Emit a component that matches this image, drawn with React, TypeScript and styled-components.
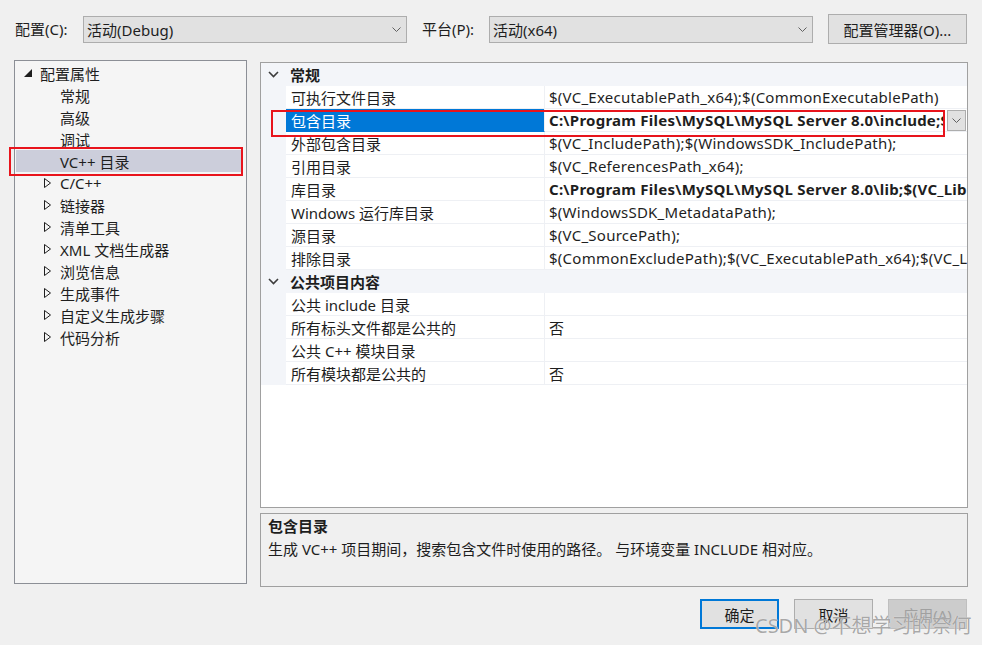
import React from 'react';
import styled, { createGlobalStyle } from 'styled-components';

const GlobalStyle = createGlobalStyle`
  html, body { margin: 0; padding: 0; background: #f0f0f0; }
  body {
    font-family: "Noto Sans", "Noto Sans CJK SC", sans-serif;
    font-size: 15px;
    color: #1e1e1e;
  }
  * { box-sizing: border-box; }
`;

const Window = styled.div`
  position: relative;
  width: 982px;
  height: 645px;
  background: #f0f0f0;
  overflow: hidden;
`;

const TopBar = styled.div`
  display: flex;
  align-items: center;
  height: 30px;
  margin-top: 14px;
  padding-left: 14px;
`;

const Label = styled.span<{ $w: number }>`
  width: ${p => p.$w}px;
  padding-left: 1px;
  white-space: nowrap;
  line-height: 20px;
`;

const Select = styled.div`
  display: flex;
  align-items: center;
  width: 324px;
  height: 27px;
  border: 1px solid #adadad;
  background: #e1e1e1;
  padding: 0 5px 0 3px;
`;

const SelectText = styled.span`
  flex: 1;
  white-space: nowrap;
`;

const PushButton = styled.div<{ $primary?: boolean; $disabled?: boolean; $w: number }>`
  display: flex;
  align-items: center;
  justify-content: center;
  width: ${p => p.$w}px;
  height: 30px;
  background: ${p => (p.$disabled ? '#cccccc' : '#e1e1e1')};
  border: ${p => (p.$primary ? '2px solid #0078d7' : p.$disabled ? '1px solid #bfbfbf' : '1px solid #adadad')};
  color: ${p => (p.$disabled ? '#a0a0a0' : '#1e1e1e')};
  white-space: nowrap;
`;

const Main = styled.div`
  display: flex;
  align-items: flex-start;
  margin-top: 16px;
  padding-left: 14px;
  gap: 13px;
`;

const TreePanel = styled.div`
  width: 233px;
  height: 524px;
  border: 1px solid #8c8f96;
  background: #f5f5f5;
  padding-top: 1px;
`;

const TreeRow = styled.div<{ $level: number; $selected?: boolean }>`
  display: flex;
  align-items: center;
  height: 22px;
  margin: 0 3px 0 1px;
  padding-left: ${p => 8 + p.$level * 20}px;
  background: ${p => (p.$selected ? '#cccedb' : 'transparent')};
  white-space: nowrap;
`;

const ArrowSlot = styled.span`
  display: flex;
  align-items: center;
  width: 16px;
  height: 22px;
`;

const RightColumn = styled.div`
  display: flex;
  flex-direction: column;
  gap: 5px;
  width: 708px;
  margin-top: 2px;
`;

const Grid = styled.div`
  height: 446px;
  border: 1px solid #a0a0a0;
  background: #ffffff;
`;

const CategoryRow = styled.div`
  display: flex;
  align-items: center;
  height: 23px;
  background: #f3f5f9;
  font-weight: 700;
`;

const CategoryToggle = styled.span`
  display: flex;
  align-items: center;
  width: 29px;
  padding-left: 7px;
`;

const PropRow = styled.div`
  display: flex;
  height: 23px;
`;

const Gutter = styled.div`
  width: 25px;
  background: #f3f5f9;
`;

const NameCell = styled.div<{ $selected?: boolean }>`
  display: flex;
  align-items: center;
  width: 259px;
  padding-left: 5px;
  background: ${p => (p.$selected ? '#0078d7' : '#ffffff')};
  color: ${p => (p.$selected ? '#ffffff' : '#1e1e1e')};
  border-bottom: 1px solid ${p => (p.$selected ? '#0078d7' : '#eef0f4')};
  border-right: 1px solid #eef0f4;
  white-space: nowrap;
`;

const ValueCell = styled.div`
  display: flex;
  align-items: center;
  flex: 1;
  min-width: 0;
  border-bottom: 1px solid #eef0f4;
`;

const ValueText = styled.span<{ $bold?: boolean }>`
  flex: 1;
  min-width: 0;
  padding-left: 4px;
  overflow: hidden;
  white-space: nowrap;
  letter-spacing: 0.25px;
  font-weight: ${p => (p.$bold ? 700 : 400)};
`;

const DropButton = styled.span`
  display: flex;
  align-items: center;
  justify-content: center;
  width: 19px;
  height: 21px;
  margin: 0 1px 0 3px;
  background: #e1e1e1;
  border: 1px solid #adadad;
`;

const DescPanel = styled.div`
  height: 74px;
  border: 1px solid #a0a0a0;
  background: #f0f0f0;
  padding: 1px 7px 0;
  line-height: 23px;
`;

const DescTitle = styled.div`
  font-weight: 700;
`;

const ButtonBar = styled.div`
  display: flex;
  justify-content: flex-end;
  gap: 15px;
  margin-top: 12px;
  padding-right: 15px;
`;

const Annotation = styled.div<{ $x: number; $y: number; $w: number; $h: number }>`
  position: absolute;
  left: ${p => p.$x}px;
  top: ${p => p.$y}px;
  width: ${p => p.$w}px;
  height: ${p => p.$h}px;
  border: 2px solid #e8141c;
  pointer-events: none;
`;

const Watermark = styled.div`
  position: absolute;
  left: 755px;
  top: 612px;
  font-size: 20px;
  line-height: 27px;
  color: rgba(140, 140, 140, 0.75);
  text-shadow: 0 0 1px #ffffff;
  white-space: nowrap;
  pointer-events: none;
`;

const SmallChevron = () => (
  <svg width="9" height="5" viewBox="0 0 9 5">
    <polyline points="0.5,0.5 4.5,4.5 8.5,0.5" fill="none" stroke="#606060" strokeWidth="1" />
  </svg>
);

const CategoryChevron = () => (
  <svg width="11" height="7" viewBox="0 0 11 7">
    <polyline points="1,1 5.5,5.5 10,1" fill="none" stroke="#3c3c3c" strokeWidth="1.6" />
  </svg>
);

const ExpandedArrow = () => (
  <svg width="8" height="8" viewBox="0 0 8 8">
    <polygon points="8,0 8,8 0,8" fill="#1e1e1e" />
  </svg>
);

const CollapsedArrow = () => (
  <svg width="7" height="10" viewBox="0 0 7 10">
    <polygon points="0.5,0.5 6.5,5 0.5,9.5" fill="none" stroke="#1e1e1e" strokeWidth="1" />
  </svg>
);

type TreeItem = { label: string; level: number; arrow?: 'open' | 'closed'; selected?: boolean };

const treeItems: TreeItem[] = [
  { label: '配置属性', level: 0, arrow: 'open' },
  { label: '常规', level: 1 },
  { label: '高级', level: 1 },
  { label: '调试', level: 1 },
  { label: 'VC++ 目录', level: 1, selected: true },
  { label: 'C/C++', level: 1, arrow: 'closed' },
  { label: '链接器', level: 1, arrow: 'closed' },
  { label: '清单工具', level: 1, arrow: 'closed' },
  { label: 'XML 文档生成器', level: 1, arrow: 'closed' },
  { label: '浏览信息', level: 1, arrow: 'closed' },
  { label: '生成事件', level: 1, arrow: 'closed' },
  { label: '自定义生成步骤', level: 1, arrow: 'closed' },
  { label: '代码分析', level: 1, arrow: 'closed' },
];

type Prop = { name: string; value: string; bold?: boolean; selected?: boolean };
type Section = { title: string; props: Prop[] };

const sections: Section[] = [
  {
    title: '常规',
    props: [
      { name: '可执行文件目录', value: '$(VC_ExecutablePath_x64);$(CommonExecutablePath)' },
      { name: '包含目录', value: 'C:\\Program Files\\MySQL\\MySQL Server 8.0\\include;$(VC_IncludePath);$(WindowsSDK_IncludePath);', bold: true, selected: true },
      { name: '外部包含目录', value: '$(VC_IncludePath);$(WindowsSDK_IncludePath);' },
      { name: '引用目录', value: '$(VC_ReferencesPath_x64);' },
      { name: '库目录', value: 'C:\\Program Files\\MySQL\\MySQL Server 8.0\\lib;$(VC_LibraryPath_x64);$(WindowsSDK_LibraryPath_x64)', bold: true },
      { name: 'Windows 运行库目录', value: '$(WindowsSDK_MetadataPath);' },
      { name: '源目录', value: '$(VC_SourcePath);' },
      { name: '排除目录', value: '$(CommonExcludePath);$(VC_ExecutablePath_x64);$(VC_LibraryPath_x64)' },
    ],
  },
  {
    title: '公共项目内容',
    props: [
      { name: '公共 include 目录', value: '' },
      { name: '所有标头文件都是公共的', value: '否' },
      { name: '公共 C++ 模块目录', value: '' },
      { name: '所有模块都是公共的', value: '否' },
    ],
  },
];

export default function App() {
  return (
    <Window>
      <GlobalStyle />
      <TopBar>
        <Label $w={69}>配置(C):</Label>
        <Select>
          <SelectText>活动(Debug)</SelectText>
          <SmallChevron />
        </Select>
        <Label $w={68} style={{ marginLeft: 14 }}>平台(P):</Label>
        <Select>
          <SelectText>活动(x64)</SelectText>
          <SmallChevron />
        </Select>
        <PushButton $w={139} style={{ marginLeft: 15 }}>配置管理器(O)...</PushButton>
      </TopBar>

      <Main>
        <TreePanel>
          {treeItems.map((t, i) => (
            <TreeRow key={i} $level={t.level} $selected={t.selected}>
              <ArrowSlot>
                {t.arrow === 'open' && <ExpandedArrow />}
                {t.arrow === 'closed' && <CollapsedArrow />}
              </ArrowSlot>
              {t.label}
            </TreeRow>
          ))}
        </TreePanel>

        <RightColumn>
          <Grid>
            {sections.map(s => (
              <React.Fragment key={s.title}>
                <CategoryRow>
                  <CategoryToggle>
                    <CategoryChevron />
                  </CategoryToggle>
                  {s.title}
                </CategoryRow>
                {s.props.map(p => (
                  <PropRow key={p.name}>
                    <Gutter />
                    <NameCell $selected={p.selected}>{p.name}</NameCell>
                    <ValueCell>
                      <ValueText $bold={p.bold}>{p.value}</ValueText>
                      {p.selected && (
                        <DropButton>
                          <SmallChevron />
                        </DropButton>
                      )}
                    </ValueCell>
                  </PropRow>
                ))}
              </React.Fragment>
            ))}
          </Grid>
          <DescPanel>
            <DescTitle>包含目录</DescTitle>
            <div>生成 VC++ 项目期间，搜索包含文件时使用的路径。 与环境变量 INCLUDE 相对应。</div>
          </DescPanel>
        </RightColumn>
      </Main>

      <ButtonBar>
        <PushButton $w={79} $primary>确定</PushButton>
        <PushButton $w={79}>取消</PushButton>
        <PushButton $w={79} $disabled>应用(A)</PushButton>
      </ButtonBar>

      <Annotation $x={9} $y={147} $w={234} $h={29} />
      <Annotation $x={271} $y={110} $w={674} $h={27} />
      <Watermark>CSDN @不想学习的奈何</Watermark>
    </Window>
  );
}
